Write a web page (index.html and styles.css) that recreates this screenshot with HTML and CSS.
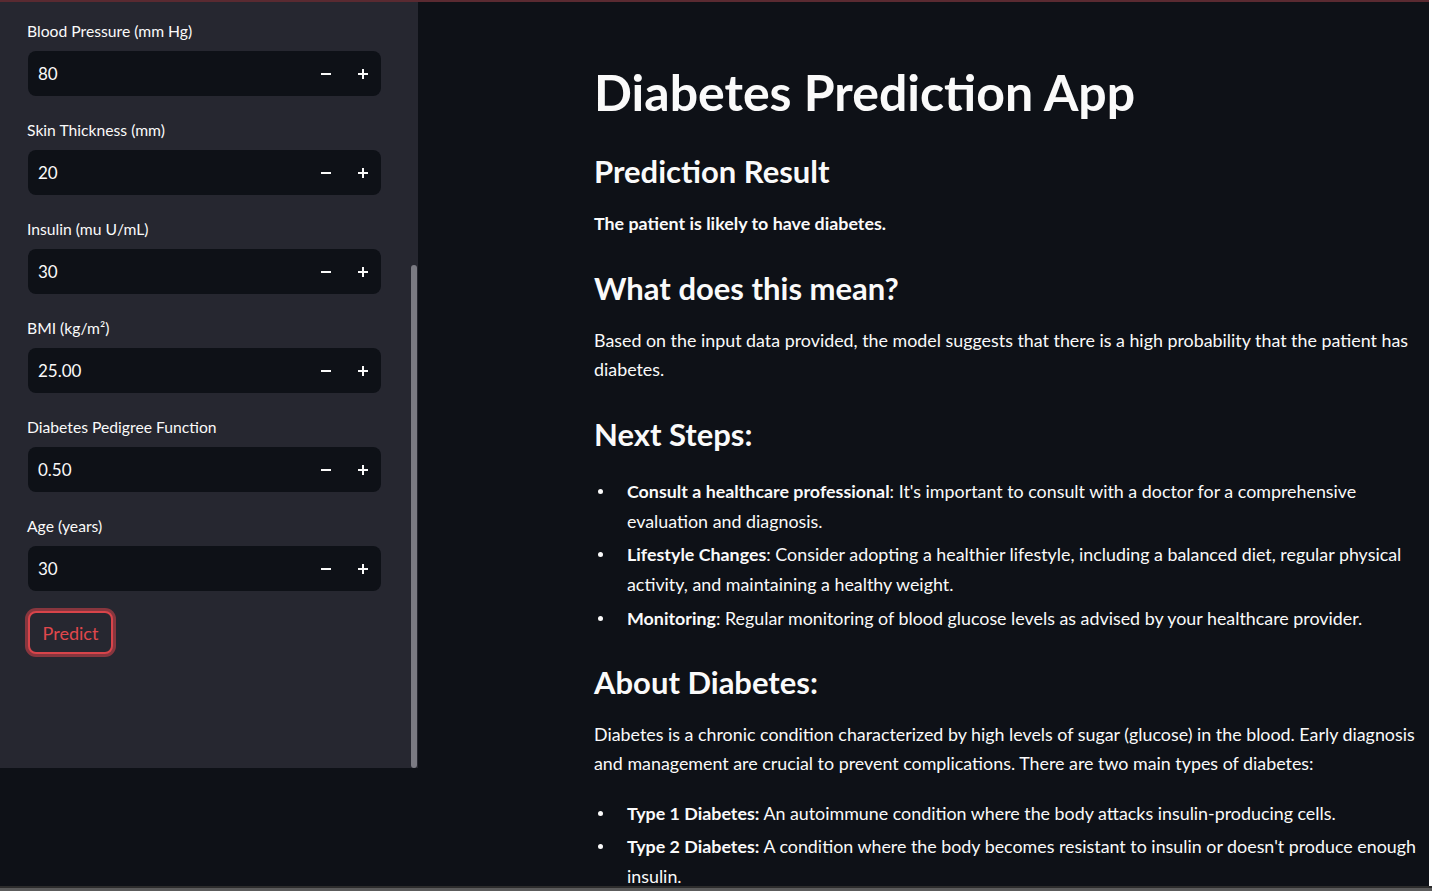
FILE: index.html
```html
<!DOCTYPE html>
<html lang="en">
<head>
<meta charset="utf-8">
<title>Diabetes Prediction App</title>
<link rel="stylesheet" href="styles.css">
</head>
<body>
<div class="app">
  <div class="topline"></div>
  <div class="layout">
    <aside class="sidebar">
      <div class="field">
        <label class="label">Blood Pressure (mm Hg)</label>
        <div class="numinput">
          <span class="value">80</span>
          <button class="step" aria-label="minus"><svg width="12" height="12" viewBox="0 0 12 12"><path d="M1 6h10" stroke="#fafafa" stroke-width="2"/></svg></button>
          <button class="step" aria-label="plus"><svg width="12" height="12" viewBox="0 0 12 12"><path d="M1 6h10M6 1v10" stroke="#fafafa" stroke-width="2"/></svg></button>
        </div>
      </div>
      <div class="field">
        <label class="label">Skin Thickness (mm)</label>
        <div class="numinput">
          <span class="value">20</span>
          <button class="step" aria-label="minus"><svg width="12" height="12" viewBox="0 0 12 12"><path d="M1 6h10" stroke="#fafafa" stroke-width="2"/></svg></button>
          <button class="step" aria-label="plus"><svg width="12" height="12" viewBox="0 0 12 12"><path d="M1 6h10M6 1v10" stroke="#fafafa" stroke-width="2"/></svg></button>
        </div>
      </div>
      <div class="field">
        <label class="label">Insulin (mu U/mL)</label>
        <div class="numinput">
          <span class="value">30</span>
          <button class="step" aria-label="minus"><svg width="12" height="12" viewBox="0 0 12 12"><path d="M1 6h10" stroke="#fafafa" stroke-width="2"/></svg></button>
          <button class="step" aria-label="plus"><svg width="12" height="12" viewBox="0 0 12 12"><path d="M1 6h10M6 1v10" stroke="#fafafa" stroke-width="2"/></svg></button>
        </div>
      </div>
      <div class="field">
        <label class="label">BMI (kg/m²)</label>
        <div class="numinput">
          <span class="value">25.00</span>
          <button class="step" aria-label="minus"><svg width="12" height="12" viewBox="0 0 12 12"><path d="M1 6h10" stroke="#fafafa" stroke-width="2"/></svg></button>
          <button class="step" aria-label="plus"><svg width="12" height="12" viewBox="0 0 12 12"><path d="M1 6h10M6 1v10" stroke="#fafafa" stroke-width="2"/></svg></button>
        </div>
      </div>
      <div class="field">
        <label class="label">Diabetes Pedigree Function</label>
        <div class="numinput">
          <span class="value">0.50</span>
          <button class="step" aria-label="minus"><svg width="12" height="12" viewBox="0 0 12 12"><path d="M1 6h10" stroke="#fafafa" stroke-width="2"/></svg></button>
          <button class="step" aria-label="plus"><svg width="12" height="12" viewBox="0 0 12 12"><path d="M1 6h10M6 1v10" stroke="#fafafa" stroke-width="2"/></svg></button>
        </div>
      </div>
      <div class="field">
        <label class="label">Age (years)</label>
        <div class="numinput">
          <span class="value">30</span>
          <button class="step" aria-label="minus"><svg width="12" height="12" viewBox="0 0 12 12"><path d="M1 6h10" stroke="#fafafa" stroke-width="2"/></svg></button>
          <button class="step" aria-label="plus"><svg width="12" height="12" viewBox="0 0 12 12"><path d="M1 6h10M6 1v10" stroke="#fafafa" stroke-width="2"/></svg></button>
        </div>
      </div>
      <button class="predict">Predict</button>
      <div class="thumb"></div>
    </aside>
    <main class="main">
      <h1 class="title">Diabetes Prediction App</h1>
      <h3 class="heading">Prediction Result</h3>
      <p class="text"><strong>The patient is likely to have diabetes.</strong></p>
      <h3 class="heading">What does this mean?</h3>
      <p class="text">Based on the input data provided, the model suggests that there is a high probability that the patient has diabetes.</p>
      <h3 class="heading">Next Steps:</h3>
      <ul class="list">
        <li><strong>Consult a healthcare professional</strong>: It's important to consult with a doctor for a comprehensive evaluation and diagnosis.</li>
        <li><strong>Lifestyle Changes</strong>: Consider adopting a healthier lifestyle, including a balanced diet, regular physical activity, and maintaining a healthy weight.</li>
        <li><strong>Monitoring</strong>: Regular monitoring of blood glucose levels as advised by your healthcare provider.</li>
      </ul>
      <h3 class="heading">About Diabetes:</h3>
      <p class="text">Diabetes is a chronic condition characterized by high levels of sugar (glucose) in the blood. Early diagnosis and management are crucial to prevent complications. There are two main types of diabetes:</p>
      <ul class="list">
        <li><strong>Type 1 Diabetes:</strong> An autoimmune condition where the body attacks insulin-producing cells.</li>
        <li><strong>Type 2 Diabetes:</strong> A condition where the body becomes resistant to insulin or doesn't produce enough insulin.</li>
      </ul>
    </main>
  </div>
</div>
<div class="bottombar"></div>
</body>
</html>
```

FILE: styles.css
```css
html, body {
  margin: 0;
  padding: 0;
  background: #ffffff;
  overflow: hidden;
}

body {
  font-family: "Lato", "Liberation Sans", sans-serif;
  color: #fafafa;
}

.app {
  width: 1429px;
  height: 886px;
  overflow: hidden;
  background: #0e1117;
}

.topline {
  height: 2px;
  background: #5a2a31;
}

.layout {
  display: flex;
  align-items: flex-start;
}

.sidebar {
  position: relative;
  box-sizing: border-box;
  width: 418px;
  height: 766px;
  flex: none;
  background: #262730;
  padding: 18px 37px 0 28px;
  display: flex;
  flex-direction: column;
}

.field {
  display: flex;
  flex-direction: column;
  margin-bottom: 23px;
}

.label {
  font-size: 15.7px;
  line-height: 22px;
  color: #fafafa;
  margin-bottom: 9px;
  margin-left: -1px;
}

.numinput {
  display: flex;
  align-items: center;
  height: 45px;
  background: #0e1117;
  border-radius: 8px;
}

.value {
  flex: 1;
  padding-left: 10px;
  font-size: 17px;
  color: #fafafa;
}

.step {
  width: 37px;
  height: 45px;
  border: 0;
  padding: 0;
  background: transparent;
  display: flex;
  align-items: center;
  justify-content: center;
}

.predict {
  align-self: flex-start;
  margin-top: -3px;
  width: 85px;
  height: 43px;
  box-sizing: border-box;
  background: #262730;
  border: 2px solid #d8444a;
  border-radius: 8px;
  box-shadow: 0 0 0 3px rgba(216, 68, 74, 0.55);
  color: #e0474c;
  font-family: "Lato", "Liberation Sans", sans-serif;
  font-size: 18px;
  padding: 0;
}

.thumb {
  position: absolute;
  right: 1px;
  top: 263px;
  width: 6px;
  height: 503px;
  border-radius: 3px;
  background: #7b7b83;
}

.main {
  flex: 1;
  padding: 60px 0 0 176px;
}

.title {
  margin: 0;
  font-size: 50px;
  line-height: 60px;
  font-weight: 700;
}

.heading {
  margin: 29px 0 18px 0;
  font-size: 31px;
  line-height: 40px;
  font-weight: 700;
}

.text {
  margin: 0 0 19px 0;
  font-size: 17.85px;
  line-height: 29.5px;
}

.text strong, .list strong {
  font-weight: 700;
}

.list {
  list-style: none;
  margin: 4px 0 19px 0;
  padding-left: 33px;
  font-size: 17.85px;
  line-height: 30px;
}

.heading + .list {
  margin-top: 22px;
}

.list li {
  position: relative;
  margin-bottom: 3.5px;
}

.list li::before {
  content: "";
  position: absolute;
  left: -29px;
  top: 13px;
  width: 5px;
  height: 5px;
  border-radius: 50%;
  background: #fafafa;
}

.bottombar {
  height: 5px;
  box-sizing: border-box;
  border-top: 2px solid #2c2c2c;
  background: #5c5c5c;
}
```
